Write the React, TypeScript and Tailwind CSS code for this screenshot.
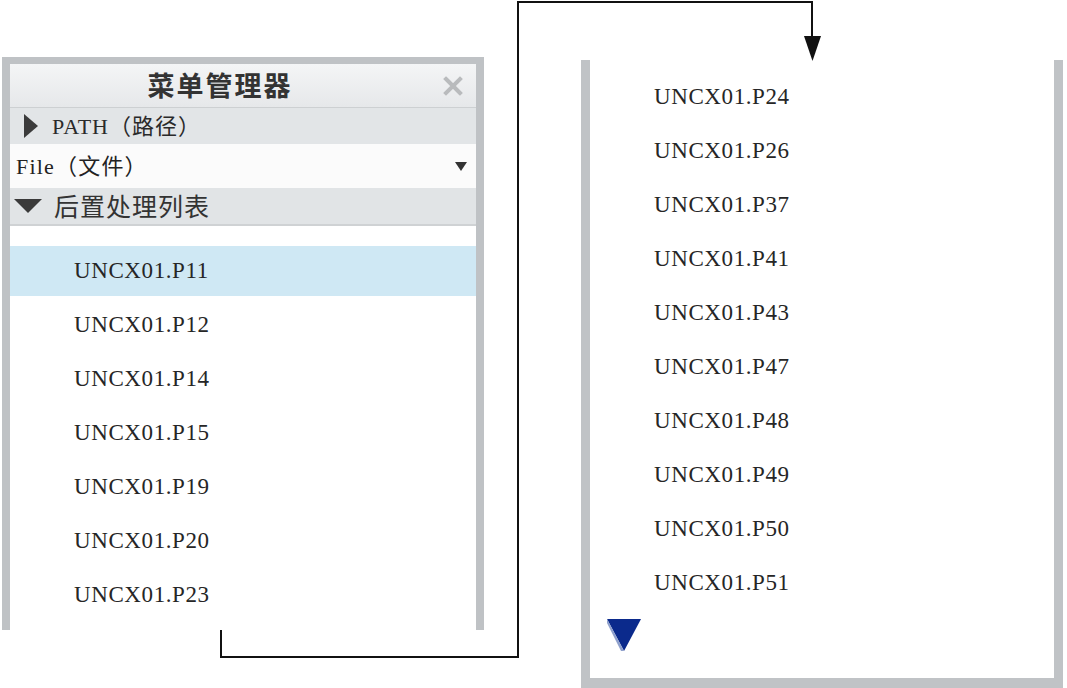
import React from "react";

const leftItems = ["UNCX01.P11", "UNCX01.P12", "UNCX01.P14", "UNCX01.P15", "UNCX01.P19", "UNCX01.P20", "UNCX01.P23"];
const rightItems = ["UNCX01.P24", "UNCX01.P26", "UNCX01.P37", "UNCX01.P41", "UNCX01.P43", "UNCX01.P47", "UNCX01.P48", "UNCX01.P49", "UNCX01.P50", "UNCX01.P51"];

const serif = "font-['Liberation_Serif','Noto_Sans_CJK_SC',serif]";

function Item({ label, selected }: { label: string; selected?: boolean }) {
  return (
    <div
      className={[
        "h-[50px] flex items-center pl-[64px] text-[23px] tracking-[0.6px] text-[#262626]",
        serif,
        selected ? "bg-[#cfe8f4]" : "",
      ].join(" ")}
    >
      {label}
    </div>
  );
}

function MenuManager() {
  return (
    <div className="mt-[57px] ml-[2px] w-[482px] h-[573px] border-x-[8px] border-t-[7px] border-[#bfc2c5] bg-white flex flex-col">
      {/* Title bar */}
      <div className="h-[44px] shrink-0 flex items-center relative bg-gradient-to-b from-[#f4f5f6] to-[#e6e8ea] border-b border-[#cdd0d2]">
        <span className="flex-1 text-center text-[27px] font-bold tracking-[2px] text-[#333] font-['Noto_Sans_CJK_SC',sans-serif] pr-[46px]">
          菜单管理器
        </span>
        <svg width="20" height="20" viewBox="0 0 20 20" className="absolute right-[13px] top-[12px]">
          <path d="M3 3L17 17M17 3L3 17" stroke="#b9bbbd" strokeWidth="4" strokeLinecap="square" />
        </svg>
      </div>

      {/* PATH row */}
      <div className="h-[36px] shrink-0 flex items-center bg-[#e2e5e7] pl-[14px] gap-[14px]">
        <svg width="14" height="24" viewBox="0 0 14 24">
          <path d="M0 0L14 12L0 24Z" fill="#3b3b3b" />
        </svg>
        <span className={`text-[22px] tracking-[1px] text-[#2a2a2a] ${serif}`}>PATH（路径）</span>
      </div>

      {/* File select */}
      <div className="h-[44px] shrink-0 flex items-center justify-between bg-[#fbfbfb] pl-[6px] pr-[9px]">
        <span className={`text-[22px] tracking-[1.2px] text-[#222] ${serif}`}>File（文件）</span>
        <svg width="12" height="9" viewBox="0 0 12 9">
          <path d="M0 0H12L6 9Z" fill="#333" />
        </svg>
      </div>

      {/* Post-processor list header */}
      <div className="h-[38px] shrink-0 flex items-center bg-[#e1e4e6] pl-[4px] gap-[12px] border-b-2 border-[#cfd2d4]">
        <svg width="28" height="14" viewBox="0 0 28 14">
          <path d="M0 0H28L14 14Z" fill="#3a3a3a" />
        </svg>
        <span className="text-[25px] tracking-[1px] text-[#333] font-['Noto_Sans_CJK_SC',sans-serif]">后置处理列表</span>
      </div>

      {/* List */}
      <div className="flex-1 flex flex-col gap-[4px] pt-[20px] overflow-hidden">
        {leftItems.map((it, i) => (
          <Item key={it} label={it} selected={i === 0} />
        ))}
      </div>
    </div>
  );
}

function Continuation() {
  return (
    <div className="mt-[60px] ml-[97px] w-[482px] h-[628px] border-x-[9px] border-b-[10px] border-[#c0c3c6] bg-white flex flex-col">
      <div className="flex flex-col gap-[4px] pt-[12px]">
        {rightItems.map((it) => (
          <Item key={it} label={it} />
        ))}
      </div>
      <div className="pl-[17px] pt-[11px]">
        <svg width="34" height="32" viewBox="0 0 34 32">
          <path d="M0 0H34L17 32Z" fill="#0b2a8c" />
          <path d="M0 0L17 32L14 32L-1 2Z" fill="#8fa0cc" />
        </svg>
      </div>
    </div>
  );
}

export default function App() {
  return (
    <div className="relative w-[1067px] h-[688px] bg-white overflow-hidden flex items-start">
      <MenuManager />
      <Continuation />

      {/* Connector between the two list parts */}
      <svg width="1067" height="688" className="absolute inset-0 pointer-events-none">
        <path d="M221 630V657H518V2H812V40" fill="none" stroke="#111" strokeWidth="2" />
        <path d="M804 36H821L812.5 61Z" fill="#111" />
      </svg>
    </div>
  );
}
